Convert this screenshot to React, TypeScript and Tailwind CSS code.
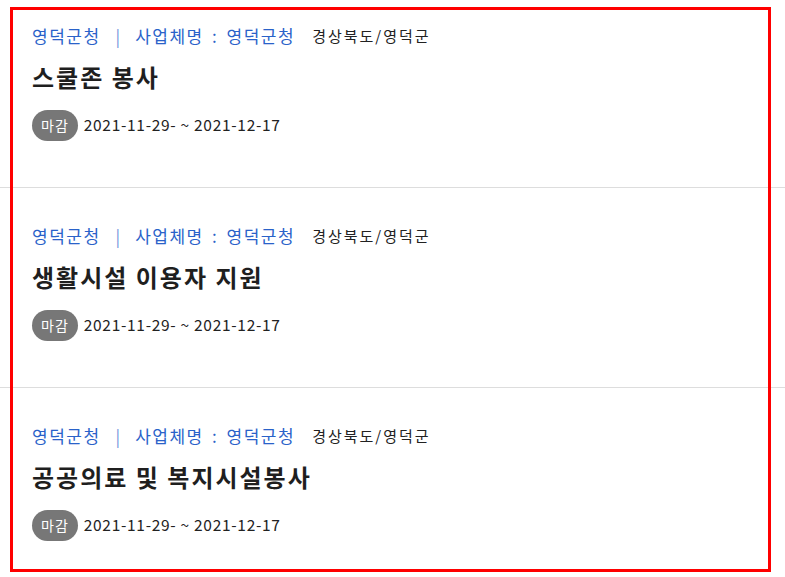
import React from 'react';

const items = [
  { title: '스쿨존 봉사' },
  { title: '생활시설 이용자 지원' },
  { title: '공공의료 및 복지시설봉사' },
];

function Item({ title, first }: { title: string; first: boolean }) {
  return (
    <li className={`border-b border-[#dddddd] pl-[32px] pb-[47px] ${first ? 'pt-[24px]' : 'pt-[36px]'}`}>
      <div className="flex items-center h-[24px] whitespace-nowrap">
        <span className="text-[17px] tracking-[1.5px] text-[#2a62c9]">영덕군청</span>
        <span className="text-[17px] text-[#6d95dc] ml-[15px] mr-[15px]">|</span>
        <span className="text-[17px] tracking-[1.5px] [word-spacing:3px] text-[#2a62c9]">사업체명 : 영덕군청</span>
        <span className="text-[15px] tracking-[2px] text-[#222222] ml-[17px]">경상북도/영덕군</span>
      </div>
      <h3 className="mt-[13px] h-[32px] leading-[32px] text-[24px] tracking-[2px] font-bold text-[#1f1f1f]">{title}</h3>
      <div className="mt-[17px] flex items-center h-[30px]">
        <span className="h-[31px] px-[9px] rounded-full bg-[#777777] text-white text-[14px] tracking-[1px] flex items-center">마감</span>
        <span className="ml-[6px] text-[15.5px] tracking-[0.7px] text-[#222222]">2021-11-29- ~ 2021-12-17</span>
      </div>
    </li>
  );
}

export default function App() {
  return (
    <div
      className="relative w-[785px] h-[577px] overflow-hidden bg-white"
      style={{ fontFamily: '"Noto Sans CJK KR", "Noto Sans", sans-serif' }}
    >
      <ul>
        {items.map((it, i) => (
          <Item key={i} title={it.title} first={i === 0} />
        ))}
      </ul>
      <div className="absolute left-[10px] top-[7px] w-[761px] h-[565px] border-[3px] border-[#ff0000] pointer-events-none" />
    </div>
  );
}
